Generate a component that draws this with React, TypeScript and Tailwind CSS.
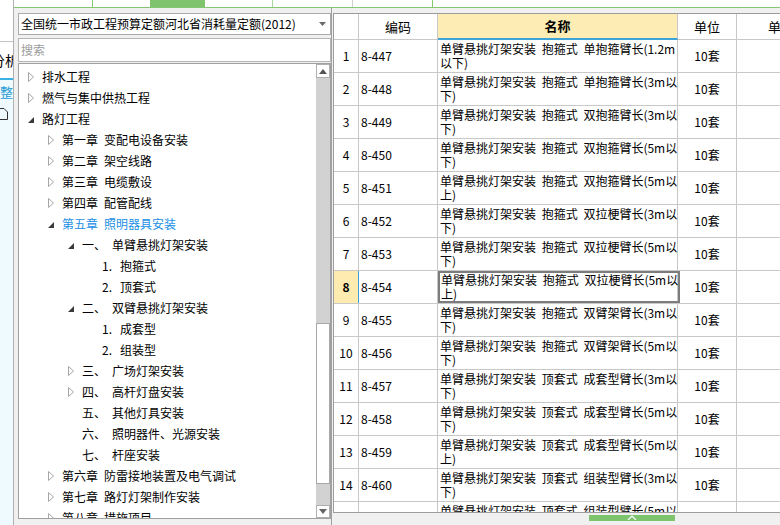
import React from "react";

type TreeNode = {
  level: 0 | 1 | 2 | 3;
  state?: "open" | "closed";
  label: string;
  sub?: string;
  active?: boolean;
};

const tree: TreeNode[] = [
  { level: 0, state: "closed", label: "排水工程" },
  { level: 0, state: "closed", label: "燃气与集中供热工程" },
  { level: 0, state: "open", label: "路灯工程" },
  { level: 1, state: "closed", label: "第一章", sub: "变配电设备安装" },
  { level: 1, state: "closed", label: "第二章", sub: "架空线路" },
  { level: 1, state: "closed", label: "第三章", sub: "电缆敷设" },
  { level: 1, state: "closed", label: "第四章", sub: "配管配线" },
  { level: 1, state: "open", label: "第五章", sub: "照明器具安装", active: true },
  { level: 2, state: "open", label: "一、", sub: "单臂悬挑灯架安装" },
  { level: 3, label: "1.", sub: "抱箍式" },
  { level: 3, label: "2.", sub: "顶套式" },
  { level: 2, state: "open", label: "二、", sub: "双臂悬挑灯架安装" },
  { level: 3, label: "1.", sub: "成套型" },
  { level: 3, label: "2.", sub: "组装型" },
  { level: 2, state: "closed", label: "三、", sub: "广场灯架安装" },
  { level: 2, state: "closed", label: "四、", sub: "高杆灯盘安装" },
  { level: 2, label: "五、", sub: "其他灯具安装" },
  { level: 2, label: "六、", sub: "照明器件、光源安装" },
  { level: 2, label: "七、", sub: "杆座安装" },
  { level: 1, state: "closed", label: "第六章", sub: "防雷接地装置及电气调试" },
  { level: 1, state: "closed", label: "第七章", sub: "路灯灯架制作安装" },
  { level: 1, state: "closed", label: "第八章", sub: "措施项目" },
];

const indent = ["pl-[9px]", "pl-[29px]", "pl-[49px]", "pl-[69px]"];

const rows = [
  ["8-447", "单臂悬挑灯架安装 抱箍式 单抱箍臂长(1.2m", "以下)"],
  ["8-448", "单臂悬挑灯架安装 抱箍式 单抱箍臂长(3m以", "下)"],
  ["8-449", "单臂悬挑灯架安装 抱箍式 双抱箍臂长(3m以", "下)"],
  ["8-450", "单臂悬挑灯架安装 抱箍式 双抱箍臂长(5m以", "下)"],
  ["8-451", "单臂悬挑灯架安装 抱箍式 双抱箍臂长(5m以", "上)"],
  ["8-452", "单臂悬挑灯架安装 抱箍式 双拉梗臂长(3m以", "下)"],
  ["8-453", "单臂悬挑灯架安装 抱箍式 双拉梗臂长(5m以", "下)"],
  ["8-454", "单臂悬挑灯架安装 抱箍式 双拉梗臂长(5m以", "上)"],
  ["8-455", "单臂悬挑灯架安装 抱箍式 双臂架臂长(3m以", "下)"],
  ["8-456", "单臂悬挑灯架安装 抱箍式 双臂架臂长(5m以", "下)"],
  ["8-457", "单臂悬挑灯架安装 顶套式 成套型臂长(3m以", "下)"],
  ["8-458", "单臂悬挑灯架安装 顶套式 成套型臂长(5m以", "下)"],
  ["8-459", "单臂悬挑灯架安装 顶套式 成套型臂长(5m以", "上)"],
  ["8-460", "单臂悬挑灯架安装 顶套式 组装型臂长(3m以", "下)"],
  ["8-461", "单臂悬挑灯架安装 顶套式 组装型臂长(5m以", "上)"],
];

const Closed = () => (
  <svg width="6" height="10" viewBox="0 0 6 10">
    <path d="M0.5 0.5 L5.5 5 L0.5 9.5 Z" fill="#fff" stroke="#a6a6a6" />
  </svg>
);

const Open = () => (
  <svg width="6" height="6" viewBox="0 0 6 6" className="mt-[2px]">
    <path d="M6 0 L6 6 L0 6 Z" fill="#3a3a3a" />
  </svg>
);

const TreeRow = ({ node }: { node: TreeNode }) => {
  const color = node.active ? "text-[#1c8fe3]" : "text-black";
  return (
    <div className={`h-[21px] flex items-center whitespace-nowrap ${indent[node.level]} ${color}`}>
      <div className="w-[14px] shrink-0 flex items-center">
        {node.state === "closed" && <Closed />}
        {node.state === "open" && <Open />}
      </div>
      {node.level === 0 && <span>{node.label}</span>}
      {node.level === 1 && (
        <>
          <span>{node.label}</span>
          <span className="ml-[6px]">{node.sub}</span>
        </>
      )}
      {node.level === 2 && (
        <>
          <span className="w-[30px] shrink-0">{node.label}</span>
          <span>{node.sub}</span>
        </>
      )}
      {node.level === 3 && (
        <>
          <span className="w-[18px] shrink-0">{node.label}</span>
          <span>{node.sub}</span>
        </>
      )}
    </div>
  );
};

const ScrollBar = () => (
  <div className="w-[14px] shrink-0 bg-[#d2d2d2] flex flex-col">
    <div className="h-[14px] shrink-0 bg-white border border-[#b0b0b0] flex items-center justify-center">
      <svg width="8" height="5" viewBox="0 0 8 5">
        <path d="M0 5 L4 0 L8 5 Z" fill="#555" />
      </svg>
    </div>
    <div className="h-[245px] shrink-0" />
    <div className="h-[161px] shrink-0 bg-white border border-[#a8a8a8]" />
    <div className="h-[21px] shrink-0" />
    <div className="h-[13px] shrink-0 bg-white border border-[#b0b0b0] flex items-center justify-center">
      <svg width="8" height="5" viewBox="0 0 8 5">
        <path d="M0 0 L4 5 L8 0 Z" fill="#666" />
      </svg>
    </div>
  </div>
);

const Panel = () => (
  <div className="w-[318px] shrink-0 border-r border-[#a0a0a0] pl-[4px] pt-[5px] flex flex-col">
    <div className="h-[22px] w-[313px] bg-white border border-[#ababab] flex items-center pl-[2px] pr-[4px]">
      <span className="flex-1 whitespace-nowrap">全国统一市政工程预算定额河北省消耗量定额(2012)</span>
      <svg width="7" height="4" viewBox="0 0 7 4">
        <path d="M0 0 L3.5 4 L7 0 Z" fill="#6a6a6a" />
      </svg>
    </div>
    <div className="mt-[3px] h-[24px] w-[313px] bg-white border border-[#b4b4b4] flex items-center pl-[2px] text-[#9c9c9c]">
      搜索
    </div>
    <div className="mt-[1px] h-[456px] w-[313px] bg-white border border-[#a0a0a0] flex">
      <div className="flex-1 overflow-hidden pt-[2px]">
        {tree.map((n, i) => (
          <TreeRow key={i} node={n} />
        ))}
      </div>
      <ScrollBar />
    </div>
  </div>
);

const TopStrip = () => (
  <div className="h-[8px] shrink-0 flex border-b border-[#86c774] bg-white">
    <div className="w-[79px] shrink-0 border-r border-[#86c774]" />
    <div className="w-[57px] shrink-0" />
    <div className="w-[55px] shrink-0 bg-[#7fc46c]" />
    <div className="w-[68px] shrink-0 border-r border-[#a8d89b]" />
    <div className="w-[80px] shrink-0 border-r border-[#cfcfcf]" />
    <div className="w-[80px] shrink-0 border-r border-[#86c774]" />
    <div className="flex-1" />
  </div>
);

const Table = () => (
  <div className="flex-1 min-w-0 pl-[1px] pt-[5px] flex flex-col">
    <div className="h-[500px] shrink-0 overflow-hidden bg-white border-l border-t border-b border-[#9c9c9c]">
      <div className="flex h-[26px] border-b border-[#c8c8c8] text-[13px]">
        <div className="w-[25px] shrink-0 border-r border-[#c8c8c8]" />
        <div className="w-[79px] shrink-0 border-r border-[#c8c8c8] flex items-center justify-center">编码</div>
        <div className="w-[240px] shrink-0 border-r border-[#c8c8c8] bg-[#fdedb4] border-b-2 border-b-[#3ea4d8] -mb-[1px] flex items-center justify-center font-bold">
          名称
        </div>
        <div className="w-[59px] shrink-0 border-r border-[#c8c8c8] flex items-center justify-center">单位</div>
        <div className="w-[80px] shrink-0 flex items-center whitespace-nowrap">
          <span className="ml-[31px]">单价</span>
        </div>
      </div>
      {rows.map((r, i) => {
        const active = i === 7;
        return (
          <div key={r[0]} className="flex h-[33px] border-b border-[#c8c8c8]">
            <div
              className={`w-[25px] shrink-0 border-r flex items-center justify-center ${
                active ? "bg-[#fdebb0] font-bold border-r-[#3aa0dd]" : "border-[#c8c8c8]"
              }`}
            >
              {i + 1}
            </div>
            <div className="w-[79px] shrink-0 border-r border-[#c8c8c8] flex items-center pl-[2px]">{r[0]}</div>
            <div className="w-[240px] shrink-0 border-r border-[#c8c8c8] flex">
              <div
                className={`flex-1 flex flex-col justify-center leading-[14px] whitespace-nowrap [word-spacing:3px] ${
                  active ? "border-2 border-[#7c7c7c] pl-[1px]" : "pl-[2px]"
                }`}
              >
                <span>{r[1]}</span>
                <span>{r[2]}</span>
              </div>
            </div>
            <div className="w-[59px] shrink-0 border-r border-[#c8c8c8] flex items-center justify-center">10套</div>
            <div className="w-[80px] shrink-0" />
          </div>
        );
      })}
    </div>
    <div className="flex-1 bg-[#f0f0f0] pt-[2px]">
      <div className="ml-[256px] w-[86px] h-[6px] bg-[#7ec46c] flex justify-center">
        <svg width="10" height="5" viewBox="0 0 10 5">
          <path d="M1 5 L5 1 L9 5" fill="none" stroke="#fff" strokeWidth="1.2" />
        </svg>
      </div>
    </div>
  </div>
);

const LeftStrip = () => (
  <div className="w-[14px] shrink-0 border-r border-[#b0b0b0] flex flex-col overflow-hidden">
    <div className="h-[42px] shrink-0 bg-white border-b border-[#c4c4c4]" />
    <div className="h-[36px] shrink-0 bg-white flex items-center">
      <span className="ml-[-9px] text-[14px] whitespace-nowrap">分析</span>
    </div>
    <div className="h-[2px] shrink-0 bg-[#3cb2e4]" />
    <div className="flex-1 bg-[#eefafd]">
      <div className="h-[24px] flex items-center text-[13px] text-[#2a9bd6] whitespace-nowrap">整个</div>
      <div className="ml-[-3px] mt-[4px]">
        <svg width="11" height="12" viewBox="0 0 11 12">
          <path d="M0.5 0.5 H7 L10.5 4 V11.5 H0.5 Z" fill="none" stroke="#333" />
        </svg>
      </div>
    </div>
  </div>
);

export default function App() {
  return (
    <div className="w-[780px] h-[525px] overflow-hidden flex bg-[#f0f0f0] text-[12px] text-black font-['Noto_Sans_CJK_SC',sans-serif]">
      <LeftStrip />
      <div className="flex-1 min-w-0 flex flex-col">
        <TopStrip />
        <div className="flex-1 flex min-h-0">
          <Panel />
          <Table />
        </div>
      </div>
    </div>
  );
}
